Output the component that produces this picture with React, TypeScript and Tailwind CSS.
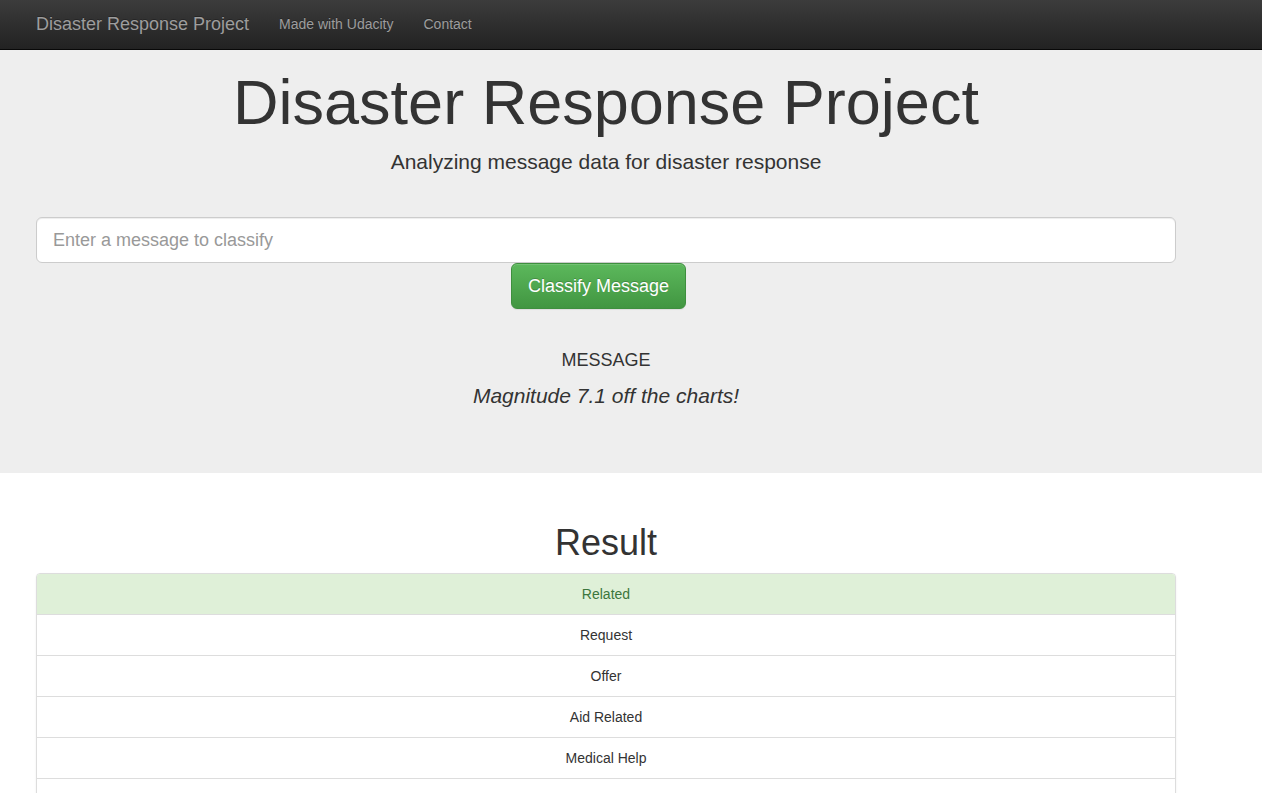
import React from "react";

const categories = [
  "Related",
  "Request",
  "Offer",
  "Aid Related",
  "Medical Help",
  "Medical Products",
  "Search And Rescue",
  "Security",
  "Military",
  "Child Alone",
  "Water",
  "Food",
];

const matched = ["Related"];

export default function App() {
  return (
    <div className="min-h-screen bg-white text-[#333] font-['Liberation_Sans',Arial,sans-serif] text-[14px]">
      {/* navbar */}
      <nav className="h-[50px] border-b border-[#080808] bg-gradient-to-b from-[#3c3c3c] to-[#222]">
        <div className="ml-[21px] w-[1170px] px-[15px] flex h-full items-center pb-[2px]">
          <a className="text-[18px] leading-[20px] text-[#9d9d9d] [text-shadow:0_-1px_0_rgba(0,0,0,0.25)]">
            Disaster Response Project
          </a>
          <a className="ml-[30px] leading-[20px] text-[#9d9d9d] [text-shadow:0_-1px_0_rgba(0,0,0,0.25)]">
            Made with Udacity
          </a>
          <a className="ml-[30px] leading-[20px] text-[#9d9d9d] [text-shadow:0_-1px_0_rgba(0,0,0,0.25)]">
            Contact
          </a>
        </div>
      </nav>

      {/* jumbotron */}
      <div className="bg-[#eee] pt-[18px] h-[423px]">
        <div className="ml-[21px] w-[1170px] px-[15px]">
          <h1 className="text-center text-[63px] leading-[69px]">Disaster Response Project</h1>
          <p className="mt-[10px] text-center text-[21px] leading-[29px]">
            Analyzing message data for disaster response
          </p>

          <input
            className="mt-[41px] block h-[46px] w-full rounded-[6px] border border-[#ccc] bg-white px-[16px] text-[18px] shadow-[inset_0_1px_1px_rgba(0,0,0,0.075)] outline-none placeholder:text-[#999]"
            placeholder="Enter a message to classify"
          />
          <div className="ml-[475px]">
            <button className="h-[46px] w-[175px] rounded-[6px] border border-[#3e8f3e] bg-gradient-to-b from-[#5cb85c] to-[#419641] text-[18px] text-white [text-shadow:0_-1px_0_rgba(0,0,0,0.2)] shadow-[inset_0_1px_0_rgba(255,255,255,0.15),0_1px_1px_rgba(0,0,0,0.075)]">
              Classify Message
            </button>
          </div>

          <div className="mt-[41px] text-center text-[18px] leading-[20px]">MESSAGE</div>
          <p className="mt-[14px] text-center text-[21px] leading-[24px] italic">
            Magnitude 7.1 off the charts!
          </p>
        </div>
      </div>

      {/* result */}
      <div className="ml-[21px] w-[1170px] px-[15px] pt-[50px] pb-[40px]">
        <h1 className="text-center text-[36px] leading-[40px]">Result</h1>
        <ul className="mt-[10px] rounded-[4px] border border-[#ddd] divide-y divide-[#ddd] shadow-[0_1px_2px_rgba(0,0,0,0.075)] overflow-hidden">
          {categories.map((c) => (
            <li
              key={c}
              className={
                matched.includes(c)
                  ? "py-[10px] px-[15px] leading-[20px] text-center bg-[#dff0d8] text-[#3c763d]"
                  : "py-[10px] px-[15px] leading-[20px] text-center bg-white"
              }
            >
              {c}
            </li>
          ))}
        </ul>
      </div>
    </div>
  );
}
